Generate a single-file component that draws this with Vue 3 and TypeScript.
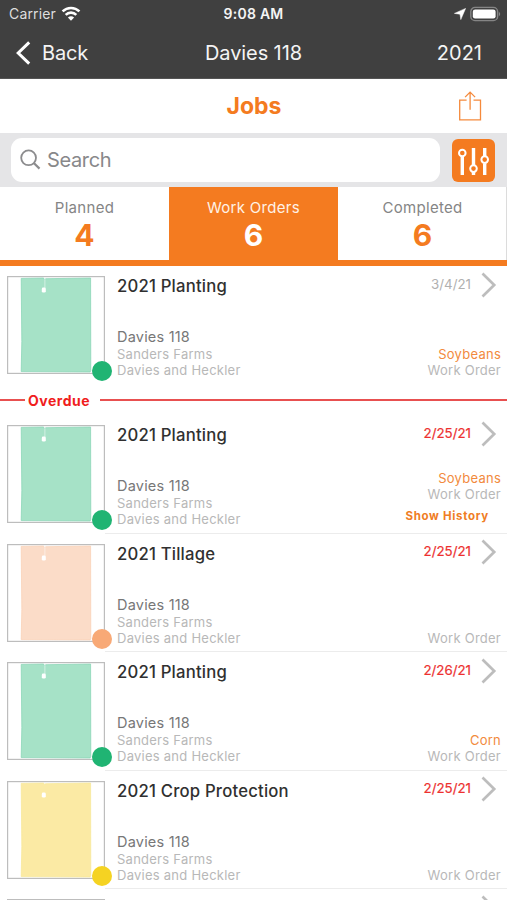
<script setup lang="ts">
interface Job {
  title: string
  date: string
  late: boolean
  crop?: string
  history?: boolean
  tone: 'green' | 'orange' | 'yellow'
  notch: boolean
}

interface Tab {
  label: string
  count: number
  active: boolean
}

const tabs: Tab[] = [
  { label: 'Planned', count: 4, active: false },
  { label: 'Work Orders', count: 6, active: true },
  { label: 'Completed', count: 6, active: false },
]

const groups: { heading: string; jobs: Job[] }[] = [
  {
    heading: '',
    jobs: [{ title: '2021 Planting', date: '3/4/21', late: false, crop: 'Soybeans', tone: 'green', notch: true }],
  },
  {
    heading: 'Overdue',
    jobs: [
      { title: '2021 Planting', date: '2/25/21', late: true, crop: 'Soybeans', history: true, tone: 'green', notch: true },
      { title: '2021 Tillage', date: '2/25/21', late: true, tone: 'orange', notch: true },
      { title: '2021 Planting', date: '2/26/21', late: true, crop: 'Corn', tone: 'green', notch: true },
      { title: '2021 Crop Protection', date: '2/25/21', late: true, tone: 'yellow', notch: false },
    ],
  },
]
</script>

<template>
  <div class="screen">
    <header class="top">
      <div class="status">
        <div class="carrier">
          <span>Carrier</span>
          <svg width="20" height="16" viewBox="0 0 20 16">
            <path d="M1.6 5.4a12 12 0 0 1 16.8 0M4.7 8.8a7.5 7.5 0 0 1 10.6 0" fill="none" stroke="#fff" stroke-width="2.6" />
            <path d="M10 14.8 6.9 11.6a4.5 4.5 0 0 1 6.2 0z" fill="#fff" />
          </svg>
        </div>
        <div class="clock">9:08 AM</div>
        <div class="power">
          <svg width="12" height="12" viewBox="0 0 12 12"><path d="M11.6.4 6.8 11.6 6 6.2.4 5.4z" fill="#fff" stroke="#fff" stroke-width=".5" /></svg>
          <svg width="31" height="16" viewBox="0 0 31 16">
            <rect x=".8" y="1.4" width="26.8" height="13.2" rx="4.2" fill="none" stroke="#858585" stroke-width="1.4" />
            <rect x="2.8" y="3.4" width="22.8" height="9.2" rx="2.3" fill="#fff" />
            <path d="M28.9 6v4.2c1.7-.7 1.7-3.5 0-4.2z" fill="#858585" />
          </svg>
        </div>
      </div>
      <nav class="nav">
        <div class="back">
          <svg width="16" height="24" viewBox="0 0 16 24"><path d="M14.2 1.4 3.2 12l11 10.6" fill="none" stroke="#fff" stroke-width="3" /></svg>
          <span>Back</span>
        </div>
        <div class="field">Davies 118</div>
        <div class="year">2021</div>
      </nav>
    </header>

    <div class="heading">
      <h1>Jobs</h1>
      <svg class="share" width="24" height="32" viewBox="0 0 24 32">
        <path d="M8.6 10.1H1.7v19.8h20.8V10.1h-7M12.1 19.8V2.4M7.1 7.1l5-5 5 5" fill="none" stroke="#f58a3c" stroke-width="1.3" />
      </svg>
    </div>

    <div class="searchbar">
      <div class="search">
        <svg width="22" height="22" viewBox="0 0 22 22">
          <circle cx="8.6" cy="8.8" r="7.4" fill="none" stroke="#8c8c8e" stroke-width="1.8" />
          <path d="m13.8 14 5.7 5.6" stroke="#8c8c8e" stroke-width="2.2" />
        </svg>
        <span>Search</span>
      </div>
      <div class="filter">
        <svg width="43" height="43" viewBox="0 0 43 43" fill="none" stroke="#fff">
          <path d="M10.3 17.6V36M21.5 9v17.2M21.5 33v3M32.7 9v8M32.7 24.4V36" stroke-width="3.4" />
          <circle cx="10.3" cy="14" r="3.3" stroke-width="2" />
          <circle cx="21.5" cy="29.6" r="3.3" stroke-width="2" />
          <circle cx="32.7" cy="20.6" r="3.3" stroke-width="2" />
        </svg>
      </div>
    </div>

    <div class="tabs">
      <div v-for="tab in tabs" :key="tab.label" class="tab" :class="{ active: tab.active }">
        <span class="label">{{ tab.label }}</span>
        <strong>{{ tab.count }}</strong>
      </div>
    </div>

    <section v-for="(group, g) in groups" :key="g">
      <div v-if="group.heading" class="divider"><span>{{ group.heading }}</span></div>
      <article v-for="(job, i) in group.jobs" :key="i" class="job" :class="job.tone">
        <div class="thumb">
          <svg width="98" height="98" viewBox="0 0 98 98">
            <rect x=".6" y=".6" width="96.8" height="96.8" fill="#fff" stroke="#bdbdbd" stroke-width="1.2" />
            <path class="shape" d="M14.2 2.4 36.6 2l.5 1.4 1.6-.7 44.9-.7.2 92.6-.7 1.4-68.9-.4.6-30z" stroke-width=".7" />
            <path v-if="job.notch" d="M37.9 1.5v11" stroke="#fff" stroke-opacity=".5" stroke-width="1" />
            <rect x="34.8" y="11.6" width="4" height="5" rx="1.4" fill="#fff" />
          </svg>
          <i class="dot"></i>
        </div>
        <div class="info">
          <h2>{{ job.title }}</h2>
          <p class="place">Davies 118</p>
          <p class="muted">Sanders Farms</p>
          <p class="muted">Davies and Heckler</p>
        </div>
        <div class="side" :class="{ raised: job.history }">
          <div class="when">
            <time :class="{ late: job.late }">{{ job.date }}</time>
            <svg width="16" height="26" viewBox="0 0 16 26"><path d="M1.5 1.5 13.2 13 1.5 24.5" fill="none" stroke="#bdbdbd" stroke-width="2.7" /></svg>
          </div>
          <p v-if="job.crop" class="muted crop">{{ job.crop }}</p>
          <p class="muted">Work Order</p>
          <p v-if="job.history" class="history">Show History</p>
        </div>
      </article>
      <div v-if="group.heading" class="job next">
        <div class="edge"></div>
        <svg class="peek" width="16" height="26" viewBox="0 0 16 26"><path d="M1.5 1.5 13.2 13 1.5 24.5" fill="none" stroke="#bdbdbd" stroke-width="2.7" /></svg>
      </div>
    </section>
  </div>
</template>

<style>
body {
  margin: 0;
  overflow: hidden;
}
</style>

<style scoped>
.screen {
  width: 507px;
  height: 900px;
  overflow: hidden;
  background: #fff;
  font-family: Inter, "Liberation Sans", sans-serif;
  color: #333;
}
h1, h2, p {
  margin: 0;
}
svg {
  display: block;
  flex: none;
}
.top {
  height: 79px;
  box-sizing: border-box;
  border-bottom: 1px solid #555;
  background: #404040;
  color: #f4f4f4;
}
.status {
  display: grid;
  grid-template-columns: 1fr auto 1fr;
  align-items: center;
  height: 27px;
  padding: 0 6px 0 9px;
  font-size: 14px;
}
.carrier,
.power {
  display: flex;
  align-items: center;
}
.carrier {
  gap: 5px;
  color: #dedede;
  letter-spacing: 0.15px;
}
.clock {
  margin-right: 3px;
  font-weight: 600;
  font-size: 14px;
  letter-spacing: 0.25px;
}
.power {
  justify-content: flex-end;
  gap: 4px;
}
.nav {
  display: grid;
  grid-template-columns: 1fr auto 1fr;
  align-items: center;
  height: 51px;
  padding: 0 25px 0 15px;
  font-size: 20px;
}
.field {
  margin-left: 10px;
  letter-spacing: -0.1px;
}
.back {
  display: flex;
  align-items: center;
  gap: 11px;
  letter-spacing: -0.2px;
}
.year {
  text-align: right;
}
.heading {
  display: grid;
  grid-template-columns: 1fr auto 1fr;
  align-items: center;
  height: 54px;
  padding: 0 25px;
}
.heading h1 {
  grid-column: 2;
  padding-left: 1px;
  font-size: 23px;
  font-weight: 700;
  line-height: 30px;
  color: #f47b20;
}
.share {
  justify-self: end;
}
.searchbar {
  display: flex;
  align-items: center;
  gap: 12px;
  height: 54px;
  padding: 0 12px 0 11px;
  box-sizing: border-box;
  background: #e5e5e7;
}
.search {
  flex: 1;
  display: flex;
  align-items: center;
  gap: 5px;
  height: 44px;
  padding-left: 9px;
  box-sizing: border-box;
  border-radius: 11px;
  background: #fff;
  color: #88888a;
  font-size: 20px;
  letter-spacing: -0.35px;
}
.filter {
  width: 43px;
  height: 43px;
  border-radius: 6px;
  background: #f47b20;
}
.tabs {
  display: grid;
  grid-template-columns: repeat(3, 1fr);
  height: 79px;
  box-sizing: border-box;
  border-bottom: 6px solid #f47b20;
}
.tab {
  display: flex;
  flex-direction: column;
  align-items: center;
  padding-top: 11px;
  color: #858585;
}
.tab:last-child {
  box-shadow: inset -1px 0 #dcdcdc;
}
.tab .label {
  font-size: 15px;
  line-height: 20px;
  letter-spacing: 0.3px;
}
.tab strong {
  font-size: 30px;
  line-height: 35px;
  font-weight: 700;
  color: #f47b20;
}
.tab.active {
  background: #f47b20;
  color: #fff2e6;
}
.tab.active strong {
  color: #fff;
}
.divider {
  display: flex;
  align-items: center;
  height: 30px;
  color: #f01d1d;
  font-size: 14px;
  font-weight: 700;
  letter-spacing: 0.5px;
}
.divider::before,
.divider::after {
  content: "";
  height: 1.5px;
  background: #e85050;
}
.divider::before {
  width: 25px;
}
.divider::after {
  flex: 1;
}
.divider span {
  padding: 0 9.5px 0 3px;
}
.job {
  display: grid;
  grid-template-columns: 98px 1fr auto;
  column-gap: 12px;
  height: 118.5px;
  box-sizing: border-box;
  padding: 10px 6px 0 7px;
  background: linear-gradient(#ececec, #ececec) 105px 100% / 402px 1px no-repeat;
}
section:first-of-type .job {
  height: 119px;
  background: none;
}
.next .edge {
  height: 98px;
  box-sizing: border-box;
  border: 1.2px solid #bdbdbd;
}
.next .peek {
  grid-column: 3;
  margin: -4.5px 4px 0 0;
}
.thumb {
  position: relative;
  height: 98px;
}
.dot {
  position: absolute;
  right: -7px;
  bottom: -7px;
  width: 20px;
  height: 20px;
  border-radius: 50%;
}
.green .dot { background: #20b473; }
.green .shape { fill: #a6e2c7; stroke: #83d3b1; }
.orange .dot { background: #f8a976; }
.orange .shape { fill: #fbdcc8; stroke: #f9ceb2; }
.yellow .dot { background: #f5d322; }
.yellow .shape { fill: #fbeaa4; stroke: #f7e694; }
.info h2 {
  height: 20px;
  margin-bottom: 32px;
  font-size: 16.7px;
  line-height: 20px;
  font-weight: 500;
  letter-spacing: 0.2px;
  color: #303030;
}
.place {
  font-size: 14.5px;
  line-height: 18px;
  letter-spacing: 0.2px;
  color: #777;
}
.muted {
  font-size: 13px;
  line-height: 16.4px;
  letter-spacing: 0.25px;
  color: #b8b8b8;
}
.side {
  display: flex;
  flex-direction: column;
  align-items: flex-end;
  height: 102.5px;
}
.when {
  display: flex;
  align-items: flex-start;
  gap: 10px;
  height: 26px;
  margin: -4.5px 4px auto 0;
}
time {
  font-size: 13.3px;
  line-height: 25px;
  color: #b0b0b0;
}
time.late {
  -webkit-text-stroke: 0.2px #ed3030;
  color: #ed3030;
}
.crop {
  color: #f28a3d;
}
.history {
  margin: 5px 12px 0 0;
  font-size: 11.5px;
  line-height: 16px;
  font-weight: 700;
  letter-spacing: 0.7px;
  color: #ef7d25;
}
.side.raised {
  height: 98.5px;
}
</style>
